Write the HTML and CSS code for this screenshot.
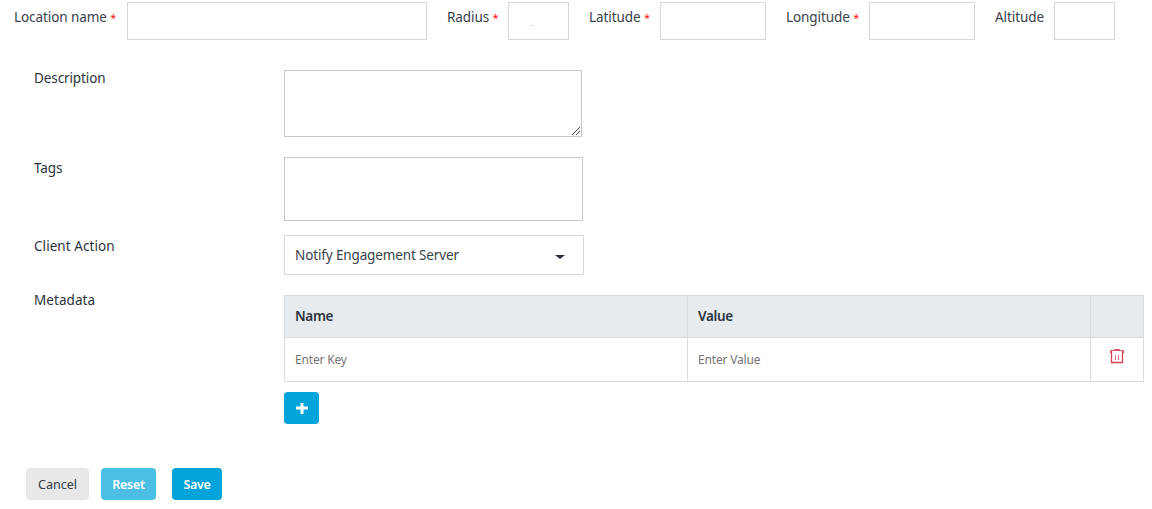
FILE: index.html
```html
<!DOCTYPE html>
<html lang="en">
<head>
<meta charset="utf-8">
<title>Location</title>
<link rel="stylesheet" href="styles.css">
</head>
<body>
<form class="page">
  <div class="topbar">
    <div class="field"><label class="label label-name">Location name <i class="req">*</i></label><input class="input input-name" type="text"></div>
    <div class="field"><label class="label label-radius">Radius <i class="req">*</i></label><div class="input input-small"><span class="dot">.</span></div></div>
    <div class="field"><label class="label label-lat">Latitude <i class="req">*</i></label><input class="input input-coord" type="text"></div>
    <div class="field"><label class="label label-long">Longitude <i class="req">*</i></label><input class="input input-coord" type="text"></div>
    <div class="field"><label class="label label-alt">Altitude</label><input class="input input-small" type="text"></div>
  </div>
  <div class="details">
    <div class="row row-desc"><span class="caption">Description</span>
      <div class="area"><svg class="grip" width="9" height="9" viewBox="0 0 9 9" shape-rendering="crispEdges"><path d="M0 8h1v1h-1zM1 7h1v1h-1zM2 6h1v1h-1zM3 5h1v1h-1zM4 4h1v1h-1zM5 3h1v1h-1zM6 2h1v1h-1zM7 1h1v1h-1zM4 8h1v1h-1zM5 7h1v1h-1zM6 6h1v1h-1zM7 5h1v1h-1z" fill="#444"/></svg></div></div>
    <div class="row row-tags"><span class="caption">Tags</span><div class="tags"></div></div>
    <div class="row row-action"><span class="caption caption-wide">Client Action</span>
      <div class="select"><span class="select-text">Notify Engagement Server</span><span class="caret"></span></div></div>
    <div class="row row-meta"><span class="caption caption-wide">Metadata</span>
      <div class="meta">
        <div class="table">
          <div class="cell head">Name</div><div class="cell head">Value</div><div class="cell head"></div>
          <div class="cell hint">Enter Key</div><div class="cell hint">Enter Value</div>
          <div class="cell trash"><svg width="16" height="16" viewBox="0 0 16 16" fill="none" stroke="#d9415a"><path d="M1.500 5V2.500H14.500V5" stroke-opacity=".85"/><path d="M2.500 3V14.500H13.500V3" stroke-width="1.300"/><path d="M5.500 2.500V1.500H10.500V2.500"/><path d="M6.500 7V12M9.500 7V12" stroke-opacity=".75"/></svg></div>
        </div>
        <button class="btn add" type="button"><svg width="12" height="12" viewBox="0 0 12 12"><path d="M4.500 1h3v3.500H12v3H7.500V12h-3V7.500H0v-3h4.500z" fill="#fff"/></svg></button>
      </div></div>
  </div>
  <div class="actions">
    <button class="btn cancel" type="button">Cancel</button><button class="btn reset" type="button">Reset</button><button class="btn save" type="button">Save</button>
  </div>
</form>
</body>
</html>
```
FILE: styles.css
```css
* { box-sizing: border-box; }
body { margin: 0; background: #fff; color: #2b343d; font: 13.5px/20px "Noto Sans", "Open Sans", sans-serif; overflow: hidden; }
.page { height: 509px; }
.topbar { display: flex; gap: 20px; padding: 2px 0 0 14px; height: 40px; }
.field { display: flex; }
.label { padding-top: 5px; white-space: nowrap; letter-spacing: -0.08px; color: #38414a; }
.label-name { width: 113px; }
.label-radius { width: 61px; }
.label-lat { width: 71px; }
.label-long { width: 83px; }
.label-alt { width: 59px; }
.req { color: #f11; font-style: normal; font-size: 11px; }
.input { height: 38px; border: 1px solid #d2d8dd; background: #fff; border-radius: 0; padding: 0; outline: 0; }
.input-name { width: 300px; }
.input-small { width: 61px; }
.input-coord { width: 106px; }
.dot { display: block; padding: 11px 0 0 21px; font-size: 9px; line-height: 18px; color: #a07860; }
.details { padding: 30px 8px 0 34px; }
.row { display: flex; }
.caption { width: 250px; flex: none; letter-spacing: -0.1px; }
.caption-wide { letter-spacing: 0.06px; }
.row-desc { height: 87px; }
.row-desc .caption { margin-top: -2px; }
.area { width: 298px; height: 67px; border: 1px solid #c8c8c8; display: flex; align-items: flex-end; justify-content: flex-end; padding: 0 0 1px; }
.row-tags { height: 78px; }
.row-tags .caption { padding-top: 1px; }
.tags { width: 299px; height: 64px; border: 1px solid #c8c8c8; }
.row-action { height: 60px; }
.row-action .caption { padding-top: 1px; }
.select { width: 300px; height: 40px; border: 1px solid #d2d8dd; display: flex; align-items: center; justify-content: space-between; padding: 0 18px 0 10px; }
.select-text { letter-spacing: -0.13px; color: #38414a; }
.caret { border: 5px solid transparent; border-top: 4px solid #25303b; border-bottom: 0; margin-top: 3px; }
.row-meta .caption { margin-top: -5px; }
.meta { width: 860px; }
.table { display: grid; grid-template-columns: 403px 403px 53px; grid-template-rows: 42px 44px; height: 87px; border-top: 1px solid #d9dbdd; border-left: 1px solid #d9dbdd; }
.cell { border-right: 1px solid #d9dbdd; border-bottom: 1px solid #d9dbdd; padding: 10px; }
.head { background: #e6ebef; font-weight: 600; letter-spacing: -0.35px; }
.hint { font-size: 12px; color: #757575; padding-top: 12px; letter-spacing: -0.18px; }
.trash { padding: 10px 0 0 18px; line-height: 0; }
.btn { border: 0; border-radius: 4px; height: 32px; padding: 2px 0 0; display: flex; align-items: center; justify-content: center; color: #fff; font: 600 12.5px/20px "Noto Sans", sans-serif; letter-spacing: -0.3px; }
.add { width: 35px; margin-top: 10px; padding: 0; background: #00a3da; }
.actions { display: flex; padding: 44px 0 0 26px; }
.cancel { width: 63px; background: #e8e8e8; color: #333b43; font-weight: 400; letter-spacing: 0; margin-right: 12px; }
.reset { width: 55px; background: #4cbee3; margin-right: 16px; }
.save { width: 50px; background: #00a3da; }
```
